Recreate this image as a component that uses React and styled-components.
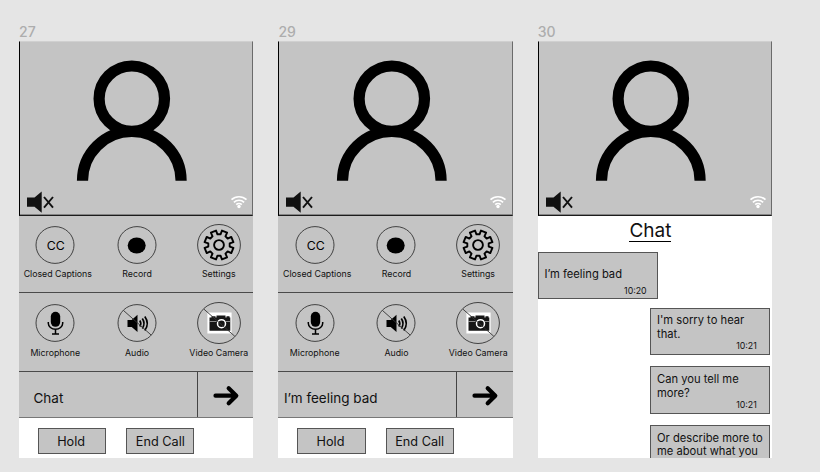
import React from "react";
import styled, { createGlobalStyle } from "styled-components";

const Global = createGlobalStyle`
  * { box-sizing: border-box; }
  body { margin: 0; background: #e5e5e5; font-family: Inter, "Liberation Sans", sans-serif; color: #111; }
  svg { display: block; overflow: visible; flex: none; }
`;

const Board = styled.main`
  width: 820px;
  height: 472px;
  padding: 21px 0 0 19px;
  display: flex;
  gap: 25px;
  overflow: hidden;
  background: #e5e5e5;
`;
const Frame = styled.section`
  width: 234.4px;
  flex: none;
`;
const FrameName = styled.div`
  height: 20px;
  line-height: 21px;
  font-size: 14px;
  font-weight: 500;
  color: #adadad;
`;
const Screen = styled.div`
  height: 417.4px;
  background: #fff;
  overflow: hidden;
`;
const Video = styled.div`
  height: 175.4px;
  background: #c4c4c4;
  border: 1px solid #1c1c1c;
  border-top-color: #d0d0d0;
  border-left-color: #000;
  border-right-color: #6b6b6b;
  box-shadow: inset 0 -0.6px 0 #444;
  display: flex;
  flex-direction: column;
  padding-top: 18px;
`;
const Portrait = styled.div`
  padding-left: 56.3px;
`;
const VideoStatus = styled.div`
  margin-top: 8.6px;
  padding: 0 5.6px 0 7px;
  display: flex;
  justify-content: space-between;
`;
const Controls = styled.div`
  height: ${(p) => p.$h}px;
  padding-top: ${(p) => p.$top}px;
  background: #c4c4c4;
  border-bottom: 1px solid #4a4a4a;
  display: grid;
  grid-template-columns: 72.6px 90px 74.4px;
`;
const Control = styled.div`
  display: flex;
  flex-direction: column;
  align-items: center;
`;
const Dial = styled.div`
  height: 42px;
  display: flex;
  align-items: center;
`;
const Label = styled.span`
  margin-top: ${(p) => p.$gap || 0}px;
  margin-left: ${(p) => p.$shift || 0}px;
  font-size: 8.8px;
  line-height: 12px;
  white-space: nowrap;
`;
const InputRow = styled.div`
  height: 46.2px;
  background: #c4c4c4;
  border-bottom: 1px solid #777;
  display: flex;
`;
const Field = styled.div`
  width: 179px;
  padding: 16.2px 0 0 ${(p) => p.$left}px;
  border-right: 1px solid #444;
  font-size: 13.5px;
  line-height: 20px;
`;
const Send = styled.div`
  padding: 14.3px 0 0 15px;
`;
const Actions = styled.div`
  padding: 10px 0 0 19px;
  display: flex;
  gap: 20px;
`;
const Action = styled.div`
  width: 68.2px;
  height: 25.5px;
  border: 1px solid #555;
  background: #c4c4c4;
  text-align: center;
  font-size: 12.7px;
  line-height: 25px;
  padding-right: ${(p) => p.$nudge || 0}px;
`;
const ChatTitle = styled.h1`
  margin: 0 0 0 91.6px;
  width: 42px;
  height: 26px;
  border-bottom: 1px solid #000;
  font-size: 19px;
  line-height: 29px;
  font-weight: 400;
  text-align: center;
`;
const Thread = styled.div`
  padding: 9.8px 2.4px 0 0.6px;
  display: flex;
  flex-direction: column;
`;
const Bubble = styled.div`
  width: 119.8px;
  height: 47.3px;
  flex: none;
  align-self: ${(p) => (p.$mine ? "flex-start" : "flex-end")};
  margin-bottom: ${(p) => (p.$mine ? 8.2 : 11.4)}px;
  padding: ${(p) => (p.$mine ? "14.4px 0 0 5px" : "5.6px 0 0 6px")};
  border: 1px solid #555;
  background: #c4c4c4;
  font-size: 11.2px;
  line-height: 13.8px;
  white-space: pre;
`;
const Time = styled.div`
  margin-top: ${(p) => (p.$mine ? 3.6 : -1.6)}px;
  padding-right: ${(p) => (p.$mine ? 10.5 : 12)}px;
  text-align: right;
  font-size: 8.8px;
  line-height: 12px;
`;

const Person = () => (
  <svg width="112" height="122" viewBox="76 60 112 122" fill="none" stroke="#000" strokeWidth="11.2">
    <circle cx="131.8" cy="98.7" r="32.7" />
    <path d="M82.5 180.8a49.3 49.3 0 0 1 98.6 0" />
  </svg>
);
const Muted = () => (
  <svg width="27" height="22" viewBox="27 191 27 22">
    <path d="M27 197.6h7.5l7.2-6.2v21.3l-7.2-6H27z" fill="#111" />
    <path d="M44 197l9 10.7M53 197l-9 10.7" stroke="#111" strokeWidth="1.9" />
  </svg>
);
const Wifi = () => (
  <svg width="16" height="22" viewBox="230.4 191 16 22" fill="none" stroke="#fff" strokeWidth="1.7">
    <path d="M230.9 199.7a11 11 0 0 1 15 0M233.3 202.3a7.4 7.4 0 0 1 10.2 0M235.6 204.7a4 4 0 0 1 5.6 0" />
    <circle cx="238.4" cy="206.5" r="1.7" fill="#fff" stroke="none" />
  </svg>
);
const Ring = ({ large, slash, children }) => {
  const rx = large ? 21.4 : 19;
  const ry = large ? 20.5 : 18.4;
  return (
    <svg width="44" height="42" viewBox="-22 -21 44 42">
      {children}
      <ellipse rx={rx} ry={ry} fill="none" stroke="#333" strokeWidth="0.9" />
      {slash && <path d={`M${-rx * 0.71} ${-ry * 0.68}L${rx * 0.74} ${ry * 0.65}`} stroke="#333" strokeWidth="0.9" />}
    </svg>
  );
};

const gearPoints = Array.from({ length: 8 }, (_, i) => {
  const base = (i * 45 + 22.5) * (Math.PI / 180);
  return [[-0.25, 10.8], [-0.19, 14.7], [0.19, 14.7], [0.25, 10.8]]
    .map(([a, r]) => `${(Math.cos(base + a) * r).toFixed(2)},${(Math.sin(base + a) * r).toFixed(2)}`)
    .join(" ");
}).join(" ");
const Gear = () => (
  <g fill="none" stroke="#000" strokeWidth="1.9" strokeLinejoin="round">
    <polygon points={gearPoints} />
    <circle r="4.9" />
  </g>
);
const Mic = () => (
  <g>
    <rect x="-4.2" y="-11.2" width="9.4" height="15" rx="4.7" />
    <path d="M-6.7-1v1.3a7.2 6 0 0 0 14.4 0V-1M.5 6.5v4.3M-3 11.1h7" fill="none" stroke="#000" strokeWidth="1.5" />
  </g>
);
const Speaker = () => (
  <g>
    <path d="M-9.5-3h4.2l5.8-5.2V9L-5.3 4h-4.2z" />
    <path d="M2.8-2.5q2 3 0 6M5.3-4.5q3.4 5 0 10M7.8-6.5q5 7 0 14" fill="none" stroke="#000" strokeWidth="1.7" />
  </g>
);
const Camera = () => (
  <g>
    <rect x="-11.6" y="-10.5" width="24.2" height="21" fill="#fff" />
    <path d="M-9.5-5.5h2v-1.2h4v1.2h1v-2h9v2h1v-1.2h3v1.2h.8V7.8H-9.5z" fill="#161616" />
    <circle cx="2.5" cy=".7" r="4" fill="#161616" stroke="#fff" strokeWidth="1.5" />
    <path d="M-9.5-1.5h7M7-1.5h4" stroke="#ddd" strokeWidth=".6" />
  </g>
);
const Arrow = () => (
  <svg width="26" height="20" viewBox="213 386 26 20" fill="none" stroke="#000" strokeWidth="4.2" strokeLinecap="round" strokeLinejoin="round">
    <path d="M215.5 395.7h20.5M228.7 388.2l7.6 7.5-7.6 7.6" />
  </svg>
);

const VideoFeed = () => (
  <Video>
    <Portrait><Person /></Portrait>
    <VideoStatus><Muted /><Wifi /></VideoStatus>
  </Video>
);

const CallScreen = ({ name, text, left }) => (
  <Frame>
    <FrameName>{name}</FrameName>
    <Screen>
      <VideoFeed />
      <Controls $h={76.6} $top={8}>
        <Control>
          <Dial><Ring><text x=".8" y="4.5" textAnchor="middle" fontSize="12.3">CC</text></Ring></Dial>
          <Label $gap={1.6} $shift={5}>Closed Captions</Label>
        </Control>
        <Control>
          <Dial><Ring><ellipse cx="-.3" cy=".5" rx="9" ry="8" /></Ring></Dial>
          <Label $gap={1.6} $shift={1}>Record</Label>
        </Control>
        <Control>
          <Dial><Ring large><Gear /></Ring></Dial>
          <Label $gap={1.6}>Settings</Label>
        </Control>
      </Controls>
      <Controls $h={79} $top={9.5}>
        <Control>
          <Dial><Ring><Mic /></Ring></Dial>
          <Label $gap={2.5}>Microphone</Label>
        </Control>
        <Control>
          <Dial><Ring slash><Speaker /></Ring></Dial>
          <Label $gap={2.5} $shift={1}>Audio</Label>
        </Control>
        <Control>
          <Dial><Ring large slash><Camera /></Ring></Dial>
          <Label $gap={2.5}>Video Camera</Label>
        </Control>
      </Controls>
      <InputRow>
        <Field $left={left}>{text}</Field>
        <Send><Arrow /></Send>
      </InputRow>
      <Actions>
        <Action $nudge={2}>Hold</Action>
        <Action>End Call</Action>
      </Actions>
    </Screen>
  </Frame>
);

const messages = [
  { text: "I’m feeling bad", time: "10:20", mine: true },
  { text: "I'm sorry to hear\nthat.", time: "10:21" },
  { text: "Can you tell me\nmore?", time: "10:21" },
  { text: "Or describe more to\nme about what you" },
];

export default function App() {
  return (
    <Board>
      <Global />
      <CallScreen name="27" text="Chat" left={14.5} />
      <CallScreen name="29" text="I’m feeling bad" left={5.5} />
      <Frame>
        <FrameName>30</FrameName>
        <Screen>
          <VideoFeed />
          <ChatTitle>Chat</ChatTitle>
          <Thread>
            {messages.map((m) => (
              <Bubble key={m.text} $mine={m.mine}>
                {m.text}
                {m.time && <Time $mine={m.mine}>{m.time}</Time>}
              </Bubble>
            ))}
          </Thread>
        </Screen>
      </Frame>
    </Board>
  );
}
